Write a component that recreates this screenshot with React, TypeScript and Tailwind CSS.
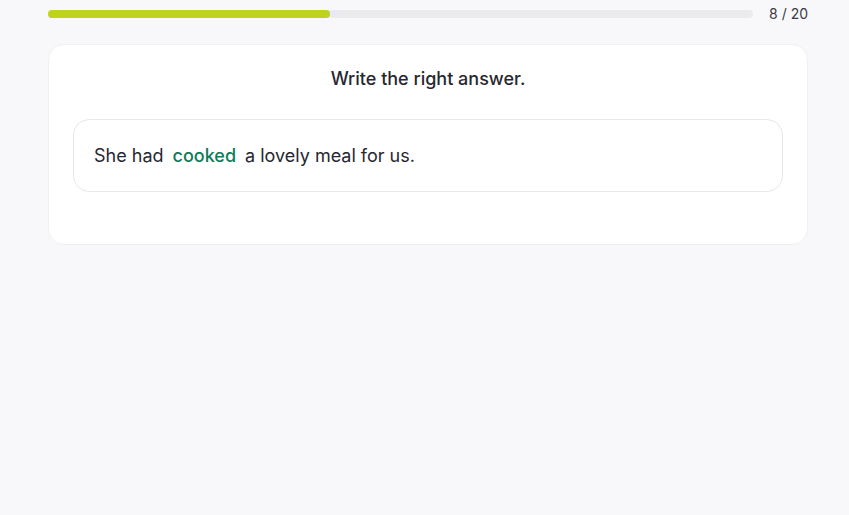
import React from 'react'

function App() {
  const current = 8
  const total = 20
  return (
    <div
      className="min-h-[515px] bg-[#f8f8fa] pl-12 pr-[41px] pt-[7px] text-[#27272f]"
      style={{ fontFamily: 'Inter, "Noto Sans", sans-serif' }}
    >
      <div className="flex items-center gap-4">
        <div className="h-2 flex-1 rounded-full bg-[#ebebee]">
          <div
            className="h-2 rounded-full bg-[#bfd31c]"
            style={{ width: `${(282 / 705) * 100}%` }}
          />
        </div>
        <div className="text-sm leading-none text-[#3a3a44]">
          {current} / {total}
        </div>
      </div>

      <div className="mt-[23px] rounded-2xl border border-[#f0f0f3] bg-white px-6 pb-[52px] pt-[20px]">
        <div className="text-center text-lg font-medium leading-7">
          Write the right answer.
        </div>
        <div className="mt-[26px] flex h-[73px] items-center rounded-2xl border border-[#e8e8ec] px-5 text-lg">
          <span>She had</span>
          <span className="px-[9px] font-medium text-[#0e7c58]">cooked</span>
          <span>a lovely meal for us.</span>
        </div>
      </div>
    </div>
  )
}

export default App
